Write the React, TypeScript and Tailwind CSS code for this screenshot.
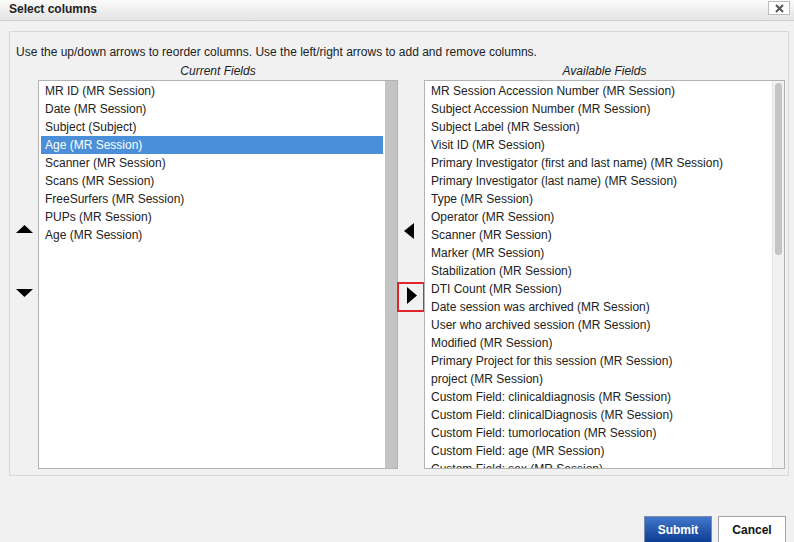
import React from "react";

const current = [
  "MR ID (MR Session)",
  "Date (MR Session)",
  "Subject (Subject)",
  "Age (MR Session)",
  "Scanner (MR Session)",
  "Scans (MR Session)",
  "FreeSurfers (MR Session)",
  "PUPs (MR Session)",
  "Age (MR Session)",
];

const available = [
  "MR Session Accession Number (MR Session)",
  "Subject Accession Number (MR Session)",
  "Subject Label (MR Session)",
  "Visit ID (MR Session)",
  "Primary Investigator (first and last name) (MR Session)",
  "Primary Investigator (last name) (MR Session)",
  "Type (MR Session)",
  "Operator (MR Session)",
  "Scanner (MR Session)",
  "Marker (MR Session)",
  "Stabilization (MR Session)",
  "DTI Count (MR Session)",
  "Date session was archived (MR Session)",
  "User who archived session (MR Session)",
  "Modified (MR Session)",
  "Primary Project for this session (MR Session)",
  "project (MR Session)",
  "Custom Field: clinicaldiagnosis (MR Session)",
  "Custom Field: clinicalDiagnosis (MR Session)",
  "Custom Field: tumorlocation (MR Session)",
  "Custom Field: age (MR Session)",
  "Custom Field: sex (MR Session)",
];

export default function App() {
  return (
    <div className="w-[794px] h-[542px] overflow-hidden bg-[#f1f1f1] font-['Liberation_Sans',Arial,sans-serif] text-[12px] text-[#222]">
      {/* Title bar */}
      <div className="h-[21px] border-b border-[#cfcfcf] bg-linear-to-b from-[#fbfbfb] to-[#e3e3e3] flex items-center justify-between pl-[9px] pr-[4px]">
        <span className="font-bold leading-[14px] -mt-[3px]">Select columns</span>
        <div className="w-[22px] h-[14px] -mt-[4px] bg-white border border-[#bdbdbd] flex items-center justify-center">
          <svg width="9" height="9" viewBox="0 0 9 9">
            <path d="M1 1 L8 8 M8 1 L1 8" stroke="#555" strokeWidth="2" />
          </svg>
        </div>
      </div>

      {/* Panel */}
      <div className="mt-[10px] ml-[9px] w-[780px] h-[445px] border border-[#d9d9d9] pt-[13px]">
        <div className="pl-[6px] leading-[14px]">
          Use the up/down arrows to reorder columns. Use the left/right arrows to add and remove columns.
        </div>

        <div className="flex mt-[5px] leading-[14px] italic">
          <div className="w-[28px]" />
          <div className="w-[360px] text-center">Current Fields</div>
          <div className="w-[26px]" />
          <div className="w-[361px] text-center">Available Fields</div>
        </div>

        <div className="flex mt-[2px] h-[389px]">
          {/* up/down */}
          <div className="w-[28px] flex flex-col items-center">
            <svg className="mt-[145px]" width="17" height="8" viewBox="0 0 17 8">
              <polygon points="0,8 8.5,0 17,8" fill="#000" />
            </svg>
            <svg className="mt-[56px]" width="17" height="8" viewBox="0 0 17 8">
              <polygon points="0,0 17,0 8.5,8" fill="#000" />
            </svg>
          </div>

          {/* current list */}
          <div className="w-[360px] h-full border border-[#b3b3b3] bg-white flex">
            <div className="flex-1 px-[2px] pt-[1px]">
              {current.map((t, i) => (
                <div
                  key={i}
                  className={
                    i === 3
                      ? "h-[18px] leading-[18px] pl-[4px] bg-[#4a8fd8] text-white"
                      : "h-[18px] leading-[18px] pl-[4px]"
                  }
                >
                  {t}
                </div>
              ))}
            </div>
            <div className="w-[12px] h-full bg-[#c4c4c4]" />
          </div>

          {/* left/right */}
          <div className="w-[26px] flex flex-col items-center">
            <svg className="mt-[143px] -ml-[4px]" width="10" height="16" viewBox="0 0 10 16">
              <polygon points="10,0 10,16 0,8" fill="#000" />
            </svg>
            <div className="mt-[43px] w-[28px] h-[30px] border-2 border-[#e0252d] flex items-center justify-center">
              <svg className="ml-[2px] -mt-[3px]" width="10" height="17" viewBox="0 0 10 17">
                <polygon points="0,0 10,8.5 0,17" fill="#000" />
              </svg>
            </div>
          </div>

          {/* available list */}
          <div className="w-[361px] h-full border border-[#b3b3b3] bg-white flex overflow-hidden">
            <div className="flex-1 px-[2px] pt-[1px] overflow-hidden">
              {available.map((t, i) => (
                <div key={i} className="h-[18px] leading-[18px] pl-[4px] whitespace-nowrap">
                  {t}
                </div>
              ))}
            </div>
            <div className="w-[12px] h-full bg-[#f1f1f1] border-l border-[#e2e2e2] flex justify-center">
              <div className="w-[7px] h-[172px] mt-[2px] rounded-full bg-[#c4c4c4]" />
            </div>
          </div>
        </div>
      </div>

      {/* Buttons */}
      <div className="flex justify-end gap-[6px] pr-[8px] mt-[40px]">
        <button className="w-[68px] h-[28px] border border-[#7d8ca6] bg-linear-to-b from-[#4177cc] to-[#083c92] text-white font-bold text-[12px]">
          Submit
        </button>
        <button className="w-[68px] h-[28px] border border-[#a3a3a3] bg-white text-[#111] font-bold text-[12px]">
          Cancel
        </button>
      </div>
    </div>
  );
}
